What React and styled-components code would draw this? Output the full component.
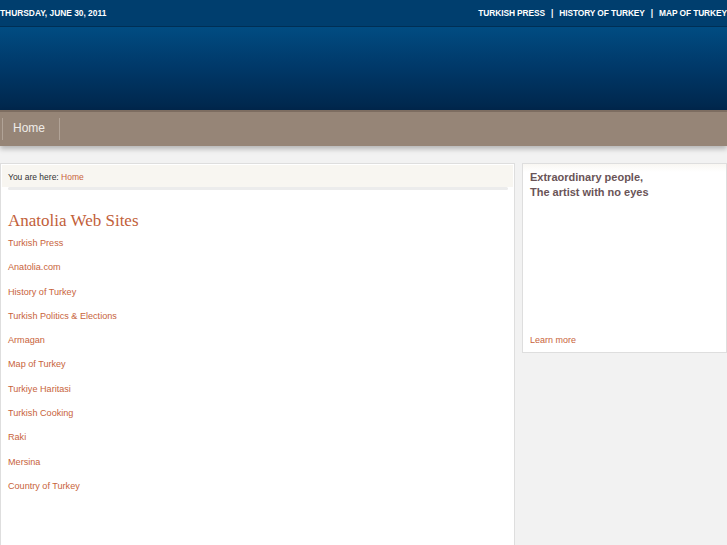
import React from "react";
import styled, { createGlobalStyle } from "styled-components";

const Global = createGlobalStyle`
  html, body { margin: 0; padding: 0; background: #f2f2f2; }
  body { font-family: "Liberation Sans", Arial, sans-serif; overflow: hidden; }
`;

const Page = styled.div`
  width: 727px;
  height: 545px;
  overflow: hidden;
  background: #f2f2f2;
`;

const TopBar = styled.div`
  height: 26px;
  background: #003e6e;
  border-bottom: 1px solid #002f55;
  display: flex;
  justify-content: space-between;
  align-items: center;
  color: #fff;
  font-size: 8.4px;
  font-weight: bold;
  text-transform: uppercase;
`;

const DateText = styled.span`
  padding-bottom: 1px;
`;

const TopLinks = styled.div`
  display: flex;
  align-items: center;
  white-space: nowrap;
  padding-bottom: 1px;
  letter-spacing: -0.1px;
`;

const TopLink = styled.span``;

const Pipe = styled.span`
  margin: 0 6px;
`;

const Header = styled.div`
  height: 83px;
  background: linear-gradient(#014c82, #003868 50%, #00264b);
`;

const Menu = styled.div`
  height: 34px;
  background: #968577;
  border-top: 2px solid #7d6d61;
  display: flex;
  align-items: center;
  box-shadow: 0 3px 5px rgba(0, 0, 0, 0.25);
`;

const Sep = styled.div`
  width: 1px;
  height: 22px;
  background: #b1a397;
  margin-left: ${(p) => p.$ml}px;
`;

const MenuItem = styled.span`
  color: #efece8;
  font-size: 12px;
  margin-left: 10px;
  margin-right: 14px;
  padding-bottom: 2px;
`;

const Content = styled.div`
  display: flex;
  gap: 7px;
  padding-top: 17px;
  align-items: flex-start;
`;

const MainBox = styled.div`
  width: 515px;
  height: 400px;
  background: #fff;
  border: 1px solid #dedede;
  box-sizing: border-box;
  padding: 1px;
`;

const Crumbs = styled.div`
  background: #f8f6f1;
  padding: 7px 6px 0 6px;
  height: 22px;
  box-sizing: border-box;
  font-size: 8.5px;
  color: #333;
`;

const CrumbBar = styled.div`
  height: 3px;
  border-radius: 2px;
  background: #ececec;
  margin: 0 5px 0 6px;
`;

const Orange = styled.span`
  color: #c8633b;
`;

const Body = styled.div`
  padding: 20px 6px 0 6px;
`;

const Title = styled.h1`
  font-family: "Liberation Serif", "Times New Roman", serif;
  font-weight: normal;
  font-size: 17px;
  color: #c2603a;
  margin: 0 0 5px 0;
  line-height: 22px;
`;

const LinkList = styled.div`
  display: flex;
  flex-direction: column;
`;

const LinkItem = styled.a`
  color: #c8633b;
  font-size: 9.1px;
  line-height: 12px;
  height: 24.3px;
  text-decoration: none;
`;

const SideBox = styled.div`
  width: 205px;
  height: 190px;
  border: 1px solid #dedede;
  box-sizing: border-box;
  display: flex;
  flex-direction: column;
  justify-content: space-between;
  padding: 6px 7px 7px 7px;
  background: linear-gradient(#f9f7f3, #fff 8px);
`;

const SideTitle = styled.div`
  font-size: 11px;
  font-weight: bold;
  color: #6a5457;
  line-height: 15px;
`;

const LearnMore = styled.a`
  font-size: 9px;
  color: #c8633b;
  text-decoration: none;
`;

const links = [
  "Turkish Press",
  "Anatolia.com",
  "History of Turkey",
  "Turkish Politics & Elections",
  "Armagan",
  "Map of Turkey",
  "Turkiye Haritasi",
  "Turkish Cooking",
  "Raki",
  "Mersina",
  "Country of Turkey",
];

export default function App() {
  return (
    <Page>
      <Global />
      <TopBar>
        <DateText>Thursday, June 30, 2011</DateText>
        <TopLinks>
          <TopLink>Turkish Press</TopLink>
          <Pipe>|</Pipe>
          <TopLink>History of Turkey</TopLink>
          <Pipe>|</Pipe>
          <TopLink>Map of Turkey</TopLink>
        </TopLinks>
      </TopBar>
      <Header />
      <Menu>
        <Sep $ml={2} />
        <MenuItem>Home</MenuItem>
        <Sep $ml={0} />
      </Menu>
      <Content>
        <MainBox>
          <Crumbs>
            You are here: <Orange>Home</Orange>
          </Crumbs>
          <CrumbBar />
          <Body>
            <Title>Anatolia Web Sites</Title>
            <LinkList>
              {links.map((l) => (
                <LinkItem key={l} href="#">
                  {l}
                </LinkItem>
              ))}
            </LinkList>
          </Body>
        </MainBox>
        <SideBox>
          <SideTitle>
            Extraordinary people,
            <br />
            The artist with no eyes
          </SideTitle>
          <LearnMore href="#">Learn more</LearnMore>
        </SideBox>
      </Content>
    </Page>
  );
}
